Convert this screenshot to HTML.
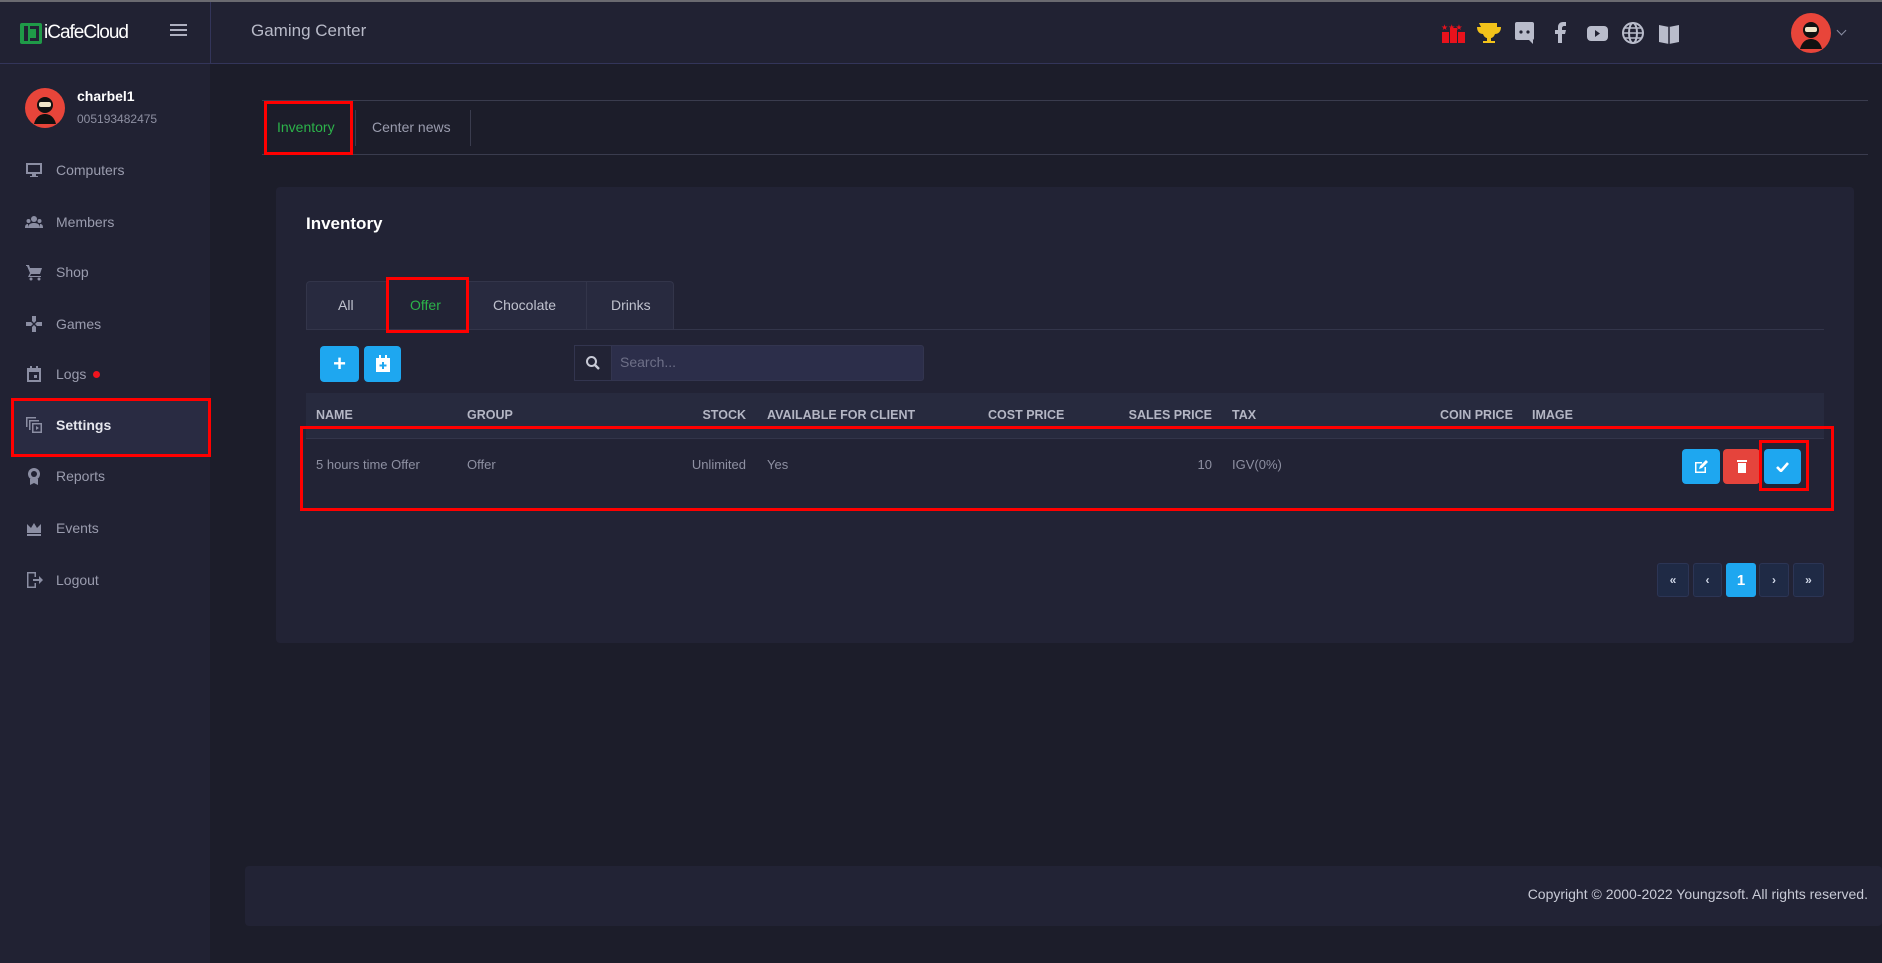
<!DOCTYPE html>
<html><head><meta charset="utf-8"><style>
*{margin:0;padding:0;box-sizing:border-box}
body{width:1882px;height:963px;background:#1c1d2a;font-family:"Liberation Sans",sans-serif;position:relative;overflow:hidden;color:#9a9cae}
.a{position:absolute}
.side{left:0;top:0;width:210px;height:963px;background:#212233}
.hdr{left:0;top:0;width:1882px;height:64px;background:#212233;border-top:2px solid #6a6a70;border-bottom:1px solid #33355a}
.mi{position:absolute;left:25px;font-size:14px;color:#9a9cae;display:flex;align-items:center;gap:13px}
.mi svg{width:18px;height:18px;fill:#8b8ea3}
.th{position:absolute;top:408px;font-size:12.5px;font-weight:bold;color:#b4b6c4}
.td{position:absolute;top:457px;font-size:13px;color:#8e90a2}
.btn{position:absolute;border-radius:4px;display:flex;align-items:center;justify-content:center;color:#fff}
.pg{position:absolute;top:563px;height:34px;width:31px;background:#1f2a45;border:1px solid #2c3555;border-radius:3px;color:#cfd6e6;font-size:12px;font-weight:bold;display:flex;align-items:center;justify-content:center}
.red{position:absolute;border:3px solid #f00}
</style></head><body>
<div class="a side"></div>
<div class="a hdr"></div>
<div class="a" style="left:210px;top:2px;width:1px;height:62px;background:#33355a"></div>
<div class="a" style="left:20px;top:23px;width:22px;height:21px;background:#1f9a48;border-radius:2px"></div>
<div class="a" style="left:24px;top:26px;width:4px;height:15px;background:#212233"></div>
<div class="a" style="left:30px;top:26px;width:9px;height:15px;border:3px solid #212233;border-left:none"></div>
<div class="a" style="left:44px;top:22px;font-size:19px;color:#fff;letter-spacing:-1px">iCafeCloud</div>
<div class="a" style="left:170px;top:24px;width:17px;height:2px;background:#aeb0c0;box-shadow:0 5px 0 #aeb0c0,0 10px 0 #aeb0c0"></div>
<div class="a" style="left:251px;top:21px;font-size:17px;color:#b8bac8">Gaming Center</div>
<svg class="a" style="left:1440px;top:20px" width="250" height="26" viewBox="0 0 250 26">
<rect x="2" y="12" width="7" height="11" fill="#e8121c"/><rect x="10" y="8" width="7" height="15" fill="#e8121c"/><rect x="18" y="12" width="7" height="11" fill="#e8121c"/>
<text x="1" y="10" font-size="8" fill="#e8121c">★★★</text>
<path d="M39 3h18v4h4c0 5-3 7-6 7-1 3-3 4-4 4v3h4v2h-12v-2h4v-3c-1 0-3-1-4-4-3 0-6-2-6-7h4z" fill="#f2c21a"/>
<rect x="75" y="2" width="19" height="18" rx="2" fill="#b9bccb"/><path d="M89 20l4 4v-4z" fill="#b9bccb"/><circle cx="81" cy="12" r="1.6" fill="#212233"/><circle cx="88" cy="12" r="1.6" fill="#212233"/>
<path d="M118 23v-9h-3v-4h3v-3c0-3 2-5 5-5h3v4h-2c-1 0-2 1-2 2v2h4l-1 4h-3v9z" fill="#b9bccb"/>
<rect x="147" y="6" width="21" height="15" rx="4" fill="#b9bccb"/><path d="M155 10v7l5-3.5z" fill="#212233"/>
<circle cx="193" cy="13" r="10" fill="none" stroke="#b9bccb" stroke-width="2"/><ellipse cx="193" cy="13" rx="4" ry="10" fill="none" stroke="#b9bccb" stroke-width="2"/><path d="M183 13h20M185 8h16M185 18h16" stroke="#b9bccb" stroke-width="1.6"/>
<path d="M219 5l10 2 10-2v17l-10 2-10-2z" fill="#b9bccb"/><path d="M229 7v17" stroke="#212233" stroke-width="1.5"/>
</svg>
<svg class="a" style="left:1791px;top:13px" width="40" height="40" viewBox="0 0 40 40"><circle cx="20" cy="20" r="20" fill="#e8453a"/><circle cx="20" cy="17" r="8" fill="#111"/><rect x="14" y="14" width="12" height="5" rx="2" fill="#f1e6c8"/><path d="M9 36c2-8 7-10 11-10s9 2 11 10z" fill="#111"/></svg>
<div class="a" style="left:1838px;top:27px;width:7px;height:7px;border-right:1.5px solid #8b8ea3;border-bottom:1.5px solid #8b8ea3;transform:rotate(45deg)"></div>
<svg class="a" style="left:25px;top:88px" width="40" height="40" viewBox="0 0 40 40"><circle cx="20" cy="20" r="20" fill="#e8453a"/><circle cx="20" cy="17" r="8" fill="#111"/><rect x="14" y="14" width="12" height="5" rx="2" fill="#f1e6c8"/><path d="M9 36c2-8 7-10 11-10s9 2 11 10z" fill="#111"/></svg>
<div class="a" style="left:77px;top:88px;font-size:14px;font-weight:bold;color:#fff">charbel1</div>
<div class="a" style="left:77px;top:112px;font-size:12px;color:#8e90a2">005193482475</div>
<div class="a" style="left:11px;top:399px;width:200px;height:57px;background:#292b42"></div>
<div class="mi" style="top:161px"><svg viewBox="0 0 18 18"><path d="M1 2h16v11H1zM3 4v7h12V4zM7 13h4v2h2v1H5v-1h2z"/></svg>Computers</div>
<div class="mi" style="top:213px"><svg viewBox="0 0 18 18"><circle cx="9" cy="6" r="3"/><circle cx="3.5" cy="8" r="2"/><circle cx="14.5" cy="8" r="2"/><path d="M3 15c0-4 3-5 6-5s6 1 6 5zM0 15c0-3 1-4 3-4v4zM18 15c0-3-1-4-3-4v4z"/></svg>Members</div>
<div class="mi" style="top:263px"><svg viewBox="0 0 18 18"><path d="M1 2h3l1 3h12l-2 6H6l-1 2h11v1H3l2-4-3-7H1z"/><circle cx="6" cy="16" r="1.5"/><circle cx="14" cy="16" r="1.5"/></svg>Shop</div>
<div class="mi" style="top:315px"><svg viewBox="0 0 18 18"><path d="M7 1h4v5L9 8 7 6zM7 17h4v-5L9 10 7 12zM1 7h5l2 2-2 2H1zM17 7h-5l-2 2 2 2h5z"/></svg>Games</div>
<div class="mi" style="top:365px"><svg viewBox="0 0 18 18"><path d="M2 3h14v14H2zM4 7v8h10V7zM5 1h2v3H5zM11 1h2v3h-2zM9 10h3v3H9z"/></svg>Logs<span style="width:7px;height:7px;border-radius:50%;background:#f0141e;margin-left:-6px"></span></div>
<div class="mi" style="top:416px;color:#e6e7ee;font-weight:bold"><svg viewBox="0 0 18 18"><path d="M1 1h10v1.5H2.5V11H1zM4 4h10v1.5H5.5V14H4zM7 7h10v10H7zM8.5 8.5v7h7v-7zM11 10l3 2-3 2z"/></svg>Settings</div>
<div class="mi" style="top:467px"><svg viewBox="0 0 18 18"><circle cx="9" cy="7" r="6"/><circle cx="9" cy="7" r="3" fill="#212233"/><path d="M5 12h8v6l-4-2-4 2z"/></svg>Reports</div>
<div class="mi" style="top:519px"><svg viewBox="0 0 18 18"><path d="M2 5l4 4 3-5 3 5 4-4v9H2zM2 15h14v2H2z"/></svg>Events</div>
<div class="mi" style="top:571px"><svg viewBox="0 0 18 18"><path d="M2 1h9v5H9.5V2.5h-6v13h6V12H11v5H2zM8 8h6V5l4 4-4 4v-3H8z"/></svg>Logout</div>
<div class="red" style="left:11px;top:398px;width:200px;height:59px"></div>
<div class="a" style="left:262px;top:100px;width:1606px;height:1px;background:#3a3c4e"></div>
<div class="a" style="left:262px;top:154px;width:1606px;height:1px;background:#3a3c4e"></div>
<div class="a" style="left:355px;top:110px;width:1px;height:36px;background:#3a3c4e"></div>
<div class="a" style="left:470px;top:110px;width:1px;height:36px;background:#3a3c4e"></div>
<div class="a" style="left:277px;top:119px;font-size:14px;color:#2cb34a">Inventory</div>
<div class="a" style="left:372px;top:119px;font-size:14px;color:#9a9cae">Center news</div>
<div class="red" style="left:264px;top:101px;width:89px;height:54px"></div>
<div class="a" style="left:276px;top:187px;width:1578px;height:456px;background:#222335;border-radius:4px"></div>
<div class="a" style="left:306px;top:214px;font-size:17px;font-weight:bold;color:#fff">Inventory</div>
<div class="a" style="left:306px;top:281px;width:368px;height:48px;background:#282a3f;border:1px solid #33354a;border-bottom:none;border-radius:4px 4px 0 0"></div>
<div class="a" style="left:386px;top:281px;width:82px;height:48px;background:#222335"></div>
<div class="a" style="left:586px;top:281px;width:1px;height:48px;background:#33354a"></div>
<div class="a" style="left:306px;top:329px;width:1518px;height:1px;background:#33354a"></div>
<div class="a" style="left:338px;top:297px;font-size:14px;color:#c0c2ce">All</div>
<div class="a" style="left:410px;top:297px;font-size:14px;color:#2cb34a">Offer</div>
<div class="a" style="left:493px;top:297px;font-size:14px;color:#c0c2ce">Chocolate</div>
<div class="a" style="left:611px;top:297px;font-size:14px;color:#c0c2ce">Drinks</div>
<div class="red" style="left:386px;top:277px;width:83px;height:56px"></div>
<div class="btn" style="left:320px;top:346px;width:39px;height:36px;background:#1ea7f0;font-size:22px;font-weight:bold">+</div>
<div class="btn" style="left:364px;top:346px;width:37px;height:36px;background:#1ea7f0"><svg width="16" height="18" viewBox="0 0 16 18"><path d="M1 3h14v14H1zM4 0h2v4H4zM10 0h2v4h-2z" fill="#fff"/><path d="M8 7v7M4.5 10.5h7" stroke="#1ea7f0" stroke-width="2"/></svg></div>
<div class="a" style="left:574px;top:345px;width:350px;height:36px;background:#2c2e4a;border:1px solid #33354f;border-radius:3px"></div>
<div class="a" style="left:574px;top:345px;width:38px;height:36px;background:#222335;border:1px solid #33354f"></div>
<svg class="a" style="left:585px;top:355px" width="16" height="16" viewBox="0 0 16 16"><circle cx="6.5" cy="6.5" r="4.5" fill="none" stroke="#c8cad6" stroke-width="2"/><path d="M10 10l4 4" stroke="#c8cad6" stroke-width="2.4"/></svg>
<div class="a" style="left:620px;top:354px;font-size:14px;color:#6e7088">Search...</div>
<div class="a" style="left:306px;top:393px;width:1518px;height:45px;background:#272a3e"></div>
<div class="a" style="left:306px;top:438px;width:1518px;height:1px;background:#33354a"></div>
<div class="th" style="left:316px">NAME</div>
<div class="th" style="left:467px">GROUP</div>
<div class="th" style="left:700px;width:46px;text-align:right">STOCK</div>
<div class="th" style="left:767px">AVAILABLE FOR CLIENT</div>
<div class="th" style="left:988px">COST PRICE</div>
<div class="th" style="left:1112px;width:100px;text-align:right">SALES PRICE</div>
<div class="th" style="left:1232px">TAX</div>
<div class="th" style="left:1440px">COIN PRICE</div>
<div class="th" style="left:1532px">IMAGE</div>
<div class="td" style="left:316px">5 hours time Offer</div>
<div class="td" style="left:467px">Offer</div>
<div class="td" style="left:646px;width:100px;text-align:right">Unlimited</div>
<div class="td" style="left:767px">Yes</div>
<div class="td" style="left:1112px;width:100px;text-align:right">10</div>
<div class="td" style="left:1232px">IGV(0%)</div>
<div class="btn" style="left:1682px;top:449px;width:38px;height:35px;background:#1ea7f0"><svg width="14" height="14" viewBox="0 0 14 14"><path d="M1 2h7v1.5H2.5v8h8V7H12v6H1z" fill="#fff"/><path d="M5 9l1-3 6-6 2 2-6 6z" fill="#fff"/></svg></div>
<div class="btn" style="left:1723px;top:449px;width:37px;height:35px;background:#e5443c"><svg width="10" height="13" viewBox="0 0 10 13"><rect x="0" y="0" width="10" height="2" fill="#fff"/><rect x="1" y="3" width="8" height="10" fill="#fff"/></svg></div>
<div class="btn" style="left:1764px;top:449px;width:37px;height:35px;background:#1ea7f0"><svg width="13" height="10" viewBox="0 0 13 10"><path d="M1 5l4 4 7-8" fill="none" stroke="#fff" stroke-width="2.6"/></svg></div>
<div class="red" style="left:300px;top:426px;width:1534px;height:85px"></div>
<div class="red" style="left:1759px;top:440px;width:50px;height:51px"></div>
<div class="pg" style="left:1657px;width:32px">«</div>
<div class="pg" style="left:1693px;width:29px">‹</div>
<div class="pg" style="left:1726px;width:30px;background:#1ea7f0;border-color:#1ea7f0;color:#fff;font-size:15px">1</div>
<div class="pg" style="left:1759px;width:30px">›</div>
<div class="pg" style="left:1793px;width:31px">»</div>
<div class="a" style="left:245px;top:866px;width:1637px;height:60px;background:#222335;border-radius:4px"></div>
<div class="a" style="right:14px;top:886px;font-size:14px;color:#c8cad6">Copyright © 2000-2022 Youngzsoft. All rights reserved.</div>
</body></html>
